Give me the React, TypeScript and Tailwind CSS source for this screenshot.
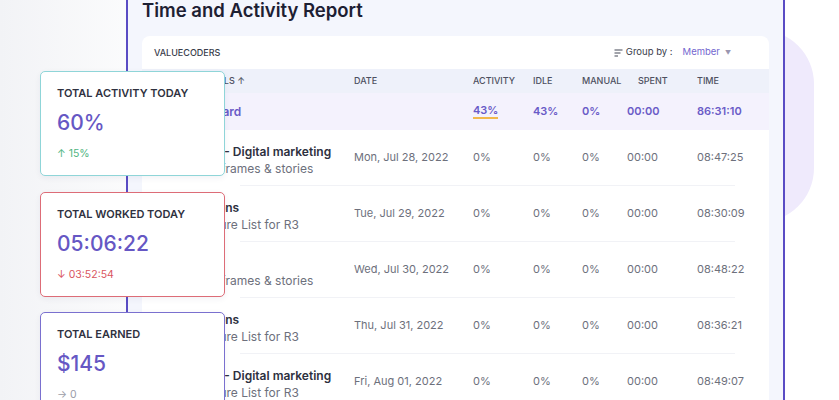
import React from 'react';

type Row = { title: string; sub: string; date: string; time: string };

const rows: Row[] = [
  { title: 'Web - Digital marketing', sub: 'Wireframes & stories', date: 'Mon, Jul 28, 2022', time: '08:47:25' },
  { title: 'Actions', sub: 'Feature List for R3', date: 'Tue, Jul 29, 2022', time: '08:30:09' },
  { title: 'Web', sub: 'Wireframes & stories', date: 'Wed, Jul 30, 2022', time: '08:48:22' },
  { title: 'Actions', sub: 'Feature List for R3', date: 'Thu, Jul 31, 2022', time: '08:36:21' },
  { title: 'Web - Digital marketing', sub: 'Feature List for R3', date: 'Fri, Aug 01, 2022', time: '08:49:07' },
];

const cols = 'grid grid-cols-[200px_119px_60px_49px_45px_70px_1fr] items-center';

function StatCard({ label, value, delta, border, deltaColor, top }: {
  label: string; value: string; delta: string; border: string; deltaColor: string; top: string;
}) {
  return (
    <div className={`absolute left-[40px] ${top} w-[185px] h-[105px] rounded-[5px] border bg-white pl-4 pt-[14px] shadow-[0_2px_6px_rgba(30,30,80,0.06)] ${border}`}>
      <p className="text-[11px] leading-[14px] font-semibold text-[#2f3140]">{label}</p>
      <p className="mt-[9px] text-[21px] leading-[28px] font-medium text-[#6657c4]">{value}</p>
      <p className={`mt-[10px] text-[10.5px] leading-[14px] ${deltaColor}`}>{delta}</p>
    </div>
  );
}

export default function App() {
  return (
    <div
      className="relative w-[839px] h-[400px] overflow-hidden bg-[linear-gradient(90deg,#f2f3f6_0%,#ffffff_22%)]"
      style={{ fontFamily: 'Inter, "Noto Sans", sans-serif' }}
    >
      <div className="absolute left-[760px] top-[30px] w-[54px] h-[192px] rounded-r-[56px] bg-[#efeafc]" />

      <div className="relative ml-[126px] w-[659px] h-full border-x-2 border-[#5a4cc4] bg-[#f4f6fd] px-[14px]">
        <h1 className="text-[18.5px] leading-[20px] font-semibold text-[#1d2033]">Time and Activity Report</h1>

        <div className="mt-[16px] rounded-t-lg bg-white">
          <div className="flex h-[33px] items-center justify-between pl-3 pr-[38px]">
            <span className="text-[9px] font-medium text-[#3a3d4c]">VALUECODERS</span>
            <div className="flex items-center text-[9.5px]">
              <svg width="9" height="8" viewBox="0 0 9 8" className="mr-[3px] text-[#444857]">
                <path d="M0.5 1h8M0.5 4h6M0.5 7h3.5" stroke="currentColor" strokeWidth="1.2" />
              </svg>
              <span className="text-[#3a3d4c]">Group by :</span>
              <span className="ml-[10px] text-[#7467cf]">Member</span>
              <span className="ml-[5px] text-[6px] text-[#9a96b0]">▼</span>
            </div>
          </div>

          <div className={`${cols} h-[24px] bg-[#eef1fa] pl-3 text-[9px] font-medium text-[#4d5060]`}>
            <span className="pl-[44px]">DETAILS ↑</span>
            <span>DATE</span>
            <span>ACTIVITY</span>
            <span>IDLE</span>
            <span>MANUAL</span>
            <span className="pl-[11px]">SPENT</span>
            <span>TIME</span>
          </div>

          <div className={`${cols} h-[37px] bg-[#f4f2fd] pl-3 text-[11px] font-semibold text-[#6a5bc7]`}>
            <span className="pl-[24px] text-[12px]">Dashboard</span>
            <span />
            <span className="w-fit border-b-2 border-[#f2b84b] leading-[13px]">43%</span>
            <span>43%</span>
            <span>0%</span>
            <span>00:00</span>
            <span>86:31:10</span>
          </div>

          {rows.map((r, i) => (
            <div key={i} className="h-[56px] pl-3">
              <div className={`${cols} h-[55px] text-[11px] text-[#6d707c]`}>
                <div className="pl-[41px] pt-[5px]">
                  <p className="text-[12px] leading-[17px] font-semibold text-[#2d3040] whitespace-nowrap">{r.title}</p>
                  <p className="text-[12px] leading-[17px] text-[#6d707c] whitespace-nowrap">{r.sub}</p>
                </div>
                <span>{r.date}</span>
                <span>0%</span>
                <span>0%</span>
                <span>0%</span>
                <span>00:00</span>
                <span>{r.time}</span>
              </div>
              <div className="ml-[86px] mr-[34px] h-px bg-[#f1f2f6]" />
            </div>
          ))}
        </div>
      </div>

      <StatCard top="top-[71px]" label="TOTAL ACTIVITY TODAY" value="60%" delta="↑ 15%" border="border-[#8fd5d8]" deltaColor="text-[#4fb57f]" />
      <StatCard top="top-[192px]" label="TOTAL WORKED TODAY" value="05:06:22" delta="↓ 03:52:54" border="border-[#dd6c77]" deltaColor="text-[#d9545e]" />
      <StatCard top="top-[312px]" label="TOTAL EARNED" value="$145" delta="→ 0" border="border-[#7a70cf]" deltaColor="text-[#9a9ca8]" />
    </div>
  );
}
